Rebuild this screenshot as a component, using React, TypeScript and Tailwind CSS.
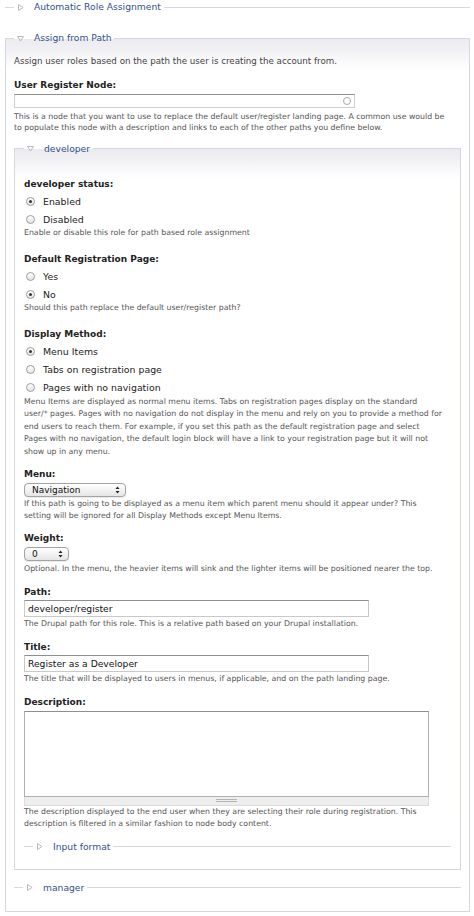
import React from 'react';

const Tri = ({ open }: { open?: boolean }) => (
  <svg width="7" height="7" viewBox="0 0 7 7" className="shrink-0">
    {open ? (
      <path d="M0.5 1.5h6L3.5 6z" fill="none" stroke="#b9b9c6" strokeLinejoin="round" />
    ) : (
      <path d="M1.5 0.5v6L6 3.5z" fill="none" stroke="#b9b9c6" strokeLinejoin="round" />
    )}
  </svg>
);

const Legend = ({ title, open }: { title: string; open?: boolean }) => (
  <legend className="px-[3px]">
    <span className="flex h-[14px] items-center gap-[10px] text-[9.2px] leading-[14px] text-[#33508f]">
      <Tri open={open} />
      {title}
    </span>
  </legend>
);

const Collapsed = ({ title, className }: { title: string; className?: string }) => (
  <fieldset className={`border-t border-[#d6d6e4] px-[9px] ${className ?? ''}`}>
    <Legend title={title} />
  </fieldset>
);

const Label = ({ children, className }: { children: React.ReactNode; className?: string }) => (
  <div className={`text-[9px] font-bold leading-[12px] text-[#222] ${className ?? ''}`}>{children}</div>
);

const Help = ({ lines, className }: { lines: string[]; className?: string }) => (
  <div className={`whitespace-nowrap text-[7.8px] text-[#555] ${className ?? 'leading-[12px]'}`}>
    {lines.map((l, i) => (
      <div key={i}>{l}</div>
    ))}
  </div>
);

const Radio = ({ label, checked, className }: { label: string; checked?: boolean; className?: string }) => (
  <div className={`flex h-[14px] items-center pl-[2px] ${className ?? ''}`}>
    <span className="flex h-[9px] w-[9px] items-center justify-center rounded-full border border-[#9c9c9c] bg-[linear-gradient(#ffffff,#e4e4e4)]">
      {checked && <span className="h-[3px] w-[3px] rounded-full bg-[#333]" />}
    </span>
    <span className="ml-[8px] text-[9.4px] leading-[14px] text-[#222]">{label}</span>
  </div>
);

const Arrows = () => (
  <svg width="5" height="8" viewBox="0 0 5 8" className="shrink-0">
    <path d="M2.5 0.5L4.5 3H0.5z" fill="#222" />
    <path d="M2.5 7.5L4.5 5H0.5z" fill="#222" />
  </svg>
);

const Select = ({ value, className }: { value: string; className: string }) => (
  <div
    className={`flex h-[14px] items-center rounded-[4px] border border-[#a3a3a3] bg-[linear-gradient(#ffffff,#e6e6e6)] pl-[7px] pr-[5px] text-[9px] leading-[12px] text-[#111] shadow-[0_1px_0_rgba(0,0,0,0.08)] ${className}`}
  >
    <span className="flex-1">{value}</span>
    <Arrows />
  </div>
);

const TextInput = ({ value }: { value: string }) => (
  <input
    readOnly
    value={value}
    className="mt-[2px] block h-[17px] w-[345px] border border-[#c9c9c9] border-t-[#8e8e8e] bg-white px-[3px] text-[9.2px] leading-[15px] text-[#111] outline-none"
  />
);

export default function App() {
  return (
    <div className="h-[916px] w-[474px] overflow-hidden bg-white pl-[5px] pr-[4px] font-['DejaVu_Sans',Verdana,sans-serif]">
      <Collapsed title="Automatic Role Assignment" />

      <fieldset className="mt-[17px] border border-[#d6d6e4] bg-[linear-gradient(#eaeaf0,#ffffff_30px)] px-[8px] pb-[16px]">
        <Legend title="Assign from Path" open />
        <p className="mt-[11px] text-[8.7px] leading-[11px] text-[#444]">
          Assign user roles based on the path the user is creating the account from.
        </p>

        <Label className="mt-[11.5px]">User Register Node:</Label>
        <div className="mt-[3px] flex h-[14px] w-[341px] items-center justify-end border border-[#cfcfcf] border-t-[#8e8e8e] bg-white pr-[3px]">
          <span className="h-[8px] w-[8px] rounded-full border border-[#a9a9a9]" />
        </div>
        <Help
          className="mt-[3px] leading-[11px]"
          lines={[
            'This is a node that you want to use to replace the default user/register landing page. A common use would be',
            'to populate this node with a description and links to each of the other paths you define below.',
          ]}
        />

        <fieldset className="mt-[9px] border border-[#d6d6e4] bg-[linear-gradient(#eaeaf0,#ffffff_30px)] px-[9px] pb-[15px]">
          <Legend title="developer" open />

          <Label className="mt-[22px]">developer status:</Label>
          <Radio className="mt-[5px]" label="Enabled" checked />
          <Radio className="mt-[4px]" label="Disabled" />
          <Help lines={['Enable or disable this role for path based role assignment']} />

          <Label className="mt-[14px]">Default Registration Page:</Label>
          <Radio className="mt-[5px]" label="Yes" />
          <Radio className="mt-[4px]" label="No" checked />
          <Help lines={['Should this path replace the default user/register path?']} />

          <Label className="mt-[14px]">Display Method:</Label>
          <Radio className="mt-[5px]" label="Menu Items" checked />
          <Radio className="mt-[4px]" label="Tabs on registration page" />
          <Radio className="mt-[4px]" label="Pages with no navigation" />
          <Help
            className="mt-[1px] leading-[12.5px]"
            lines={[
              'Menu Items are displayed as normal menu items. Tabs on registration pages display on the standard',
              'user/* pages. Pages with no navigation do not display in the menu and rely on you to provide a method for',
              'end users to reach them. For example, if you set this path as the default registration page and select',
              'Pages with no navigation, the default login block will have a link to your registration page but it will not',
              'show up in any menu.',
            ]}
          />

          <Label className="mt-[9.5px]">Menu:</Label>
          <Select className="mt-[3px] w-[102px]" value="Navigation" />
          <Help
            className="mt-[1px] leading-[12.5px]"
            lines={[
              'If this path is going to be displayed as a menu item which parent menu should it appear under? This',
              'setting will be ignored for all Display Methods except Menu Items.',
            ]}
          />

          <Label className="mt-[9px]">Weight:</Label>
          <Select className="mt-[3px] w-[45px]" value="0" />
          <Help
            className="mt-[2px] leading-[12px]"
            lines={['Optional. In the menu, the heavier items will sink and the lighter items will be positioned nearer the top.']}
          />

          <Label className="mt-[11px]">Path:</Label>
          <TextInput value="developer/register" />
          <Help
            className="mt-[1px] leading-[12px]"
            lines={['The Drupal path for this role. This is a relative path based on your Drupal installation.']}
          />

          <Label className="mt-[11px]">Title:</Label>
          <TextInput value="Register as a Developer" />
          <Help
            className="mt-[1px] leading-[12px]"
            lines={['The title that will be displayed to users in menus, if applicable, and on the path landing page.']}
          />

          <Label className="mt-[11px]">Description:</Label>
          <div className="mt-[3px] w-[405px]">
            <div className="h-[86px] border border-[#b0b0b0] border-t-[#8e8e8e] bg-white" />
            <div className="flex h-[9px] items-center justify-center border-x border-b border-[#dcdcdc] border-t-[#bdbdbd] bg-[#eeeeee]">
              <div className="flex w-[21px] flex-col gap-[1px]">
                <span className="h-px bg-[#b3b3b3]" />
                <span className="h-px bg-[#b3b3b3]" />
              </div>
            </div>
          </div>
          <Help
            lines={[
              'The description displayed to the end user when they are selecting their role during registration. This',
              'description is filtered in a similar fashion to node body content.',
            ]}
          />

          <Collapsed className="mt-[10px]" title="Input format" />
        </fieldset>

        <Collapsed className="mt-[11px]" title="manager" />
      </fieldset>
    </div>
  );
}
